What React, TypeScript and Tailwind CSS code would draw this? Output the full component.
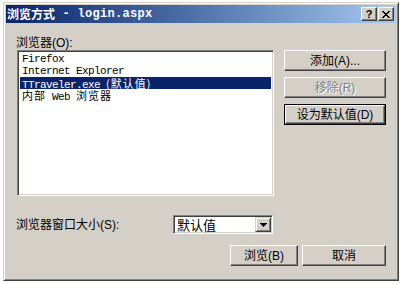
import React from "react";

const ui = { fontFamily: '"Liberation Sans","Noto Sans CJK SC",sans-serif' };
const mono = { fontFamily: '"Liberation Mono","Noto Sans CJK SC",monospace' };
const cjk = { fontFamily: '"Noto Sans CJK SC",sans-serif' };

function Btn({
  children,
  w,
  disabled,
  def,
}: {
  children: React.ReactNode;
  w: string;
  disabled?: boolean;
  def?: boolean;
}) {
  const inner = (
    <div className="flex-1 flex items-center justify-center border border-t-white border-l-white border-r-[#404040] border-b-[#404040] shadow-[inset_-1px_-1px_#808080] bg-[#d4d0c8]">
      <span
        className={
          "text-[12px] leading-[14px] " +
          (disabled ? "text-[#808080] [text-shadow:1px_1px_#ffffff]" : "text-black")
        }
        style={ui}
      >
        {children}
      </span>
    </div>
  );
  return (
    <div className={"h-[21px] flex " + w + (def ? " border border-black" : "")}>{inner}</div>
  );
}

function Cjk({ children }: { children: React.ReactNode }) {
  return (
    <span className="text-[11px] leading-[12px] tracking-[1px]" style={cjk}>
      {children}
    </span>
  );
}

function Lat({ children }: { children: React.ReactNode }) {
  return (
    <span className="text-[11px] leading-[12px] tracking-[-0.6px] whitespace-pre" style={mono}>
      {children}
    </span>
  );
}

export default function App() {
  return (
    <div className="w-[403px] h-[284px] bg-white overflow-hidden">
      <div className="ml-[3px] mt-[2px] w-[396px] h-[279px] bg-[#d4d0c8] border border-t-[#d4d0c8] border-l-[#d4d0c8] border-r-[#404040] border-b-[#404040] shadow-[inset_1px_1px_#ffffff,inset_-1px_-1px_#808080] flex flex-col">
        {/* title bar */}
        <div className="mx-[2px] mt-[2px] h-[18px] flex items-center bg-gradient-to-r from-[#0a246a] to-[#a6caf0] pl-[1px] pr-[2px]">
          <span className="text-white font-bold text-[12px] leading-[14px]" style={cjk}>
            浏览方式
          </span>
          <span
            className="text-white font-bold text-[12px] leading-[14px] tracking-[0.3px] whitespace-pre"
            style={mono}
          >
            {" - login.aspx"}
          </span>
          <div className="flex-1" />
          <div className="w-[16px] h-[14px] flex items-center justify-center bg-[#d4d0c8] border border-t-white border-l-white border-r-[#404040] border-b-[#404040] shadow-[inset_-1px_-1px_#808080]">
            <span className="text-[11px] font-bold leading-[11px] text-black" style={ui}>
              ?
            </span>
          </div>
          <div className="ml-[1px] w-[16px] h-[14px] flex items-center justify-center bg-[#d4d0c8] border border-t-white border-l-white border-r-[#404040] border-b-[#404040] shadow-[inset_-1px_-1px_#808080]">
            <svg width="8" height="7" viewBox="0 0 8 7" shapeRendering="crispEdges">
              <path
                d="M0 0h2v1H0zM6 0h2v1H6zM1 1h2v1H1zM5 1h2v1H5zM2 2h4v1H2zM3 3h2v1H3zM2 4h4v1H2zM1 5h2v1H1zM5 5h2v1H5zM0 6h2v1H0zM6 6h2v1H6z"
                fill="#000"
              />
            </svg>
          </div>
        </div>

        {/* content */}
        <div className="pl-[12px] pr-[12px] mt-[13px] flex flex-col">
          <div className="h-[14px] text-[12px] leading-[14px] text-black" style={ui}>
            浏览器(O):
          </div>
          <div className="flex gap-[10px]">
            <div className="ml-[1px] w-[257px] h-[146px] bg-white border border-t-[#808080] border-l-[#808080] border-r-white border-b-white shadow-[inset_1px_1px_#404040,inset_-1px_-1px_#d4d0c8] p-[2px]">
              <div className="text-black">
                <div className="h-[12px] pl-[2px] flex items-baseline">
                  <Lat>Firefox</Lat>
                </div>
                <div className="h-[12px] pl-[2px] flex items-baseline">
                  <Lat>Internet Explorer</Lat>
                </div>
                <div className="h-[12px] pl-[2px] flex items-baseline bg-[#0a246a] text-white">
                  <Lat>{"TTraveler.exe "}</Lat>
                  <Cjk>(默认值)</Cjk>
                </div>
                <div className="h-[12px] pl-[2px] flex items-baseline">
                  <Cjk>内部</Cjk>
                  <Lat>{" Web "}</Lat>
                  <Cjk>浏览器</Cjk>
                </div>
              </div>
            </div>
            <div className="flex flex-col gap-[6px]">
              <Btn w="w-[102px]">添加(A)...</Btn>
              <Btn w="w-[102px]" disabled>
                移除(R)
              </Btn>
              <Btn w="w-[102px]" def>
                设为默认值(D)
              </Btn>
            </div>
          </div>

          {/* window size row */}
          <div className="mt-[19px] flex items-center h-[19px]">
            <div className="w-[157px] text-[12px] leading-[14px] text-black" style={ui}>
              浏览器窗口大小(S):
            </div>
            <div className="w-[100px] h-[19px] bg-white border border-t-[#808080] border-l-[#808080] border-r-white border-b-white shadow-[inset_1px_1px_#404040,inset_-1px_-1px_#d4d0c8] flex items-center p-[1px]">
              <div className="flex-1 pl-[2px] text-[13px] leading-[15px] text-black" style={cjk}>
                默认值
              </div>
              <div className="w-[16px] h-[15px] bg-[#d4d0c8] border border-t-[#d4d0c8] border-l-[#d4d0c8] border-r-[#404040] border-b-[#404040] shadow-[inset_1px_1px_#ffffff,inset_-1px_-1px_#808080] flex items-center justify-center">
                <svg width="7" height="4" viewBox="0 0 7 4" shapeRendering="crispEdges">
                  <path d="M0 0h7v1H0zM1 1h5v1H1zM2 2h3v1H2zM3 3h1v1H3z" fill="#000" />
                </svg>
              </div>
            </div>
          </div>

          {/* bottom buttons */}
          <div className="mt-[11px] flex justify-end gap-[4px]">
            <Btn w="w-[68px]">浏览(B)</Btn>
            <Btn w="w-[84px]">取消</Btn>
          </div>
        </div>
      </div>
    </div>
  );
}
